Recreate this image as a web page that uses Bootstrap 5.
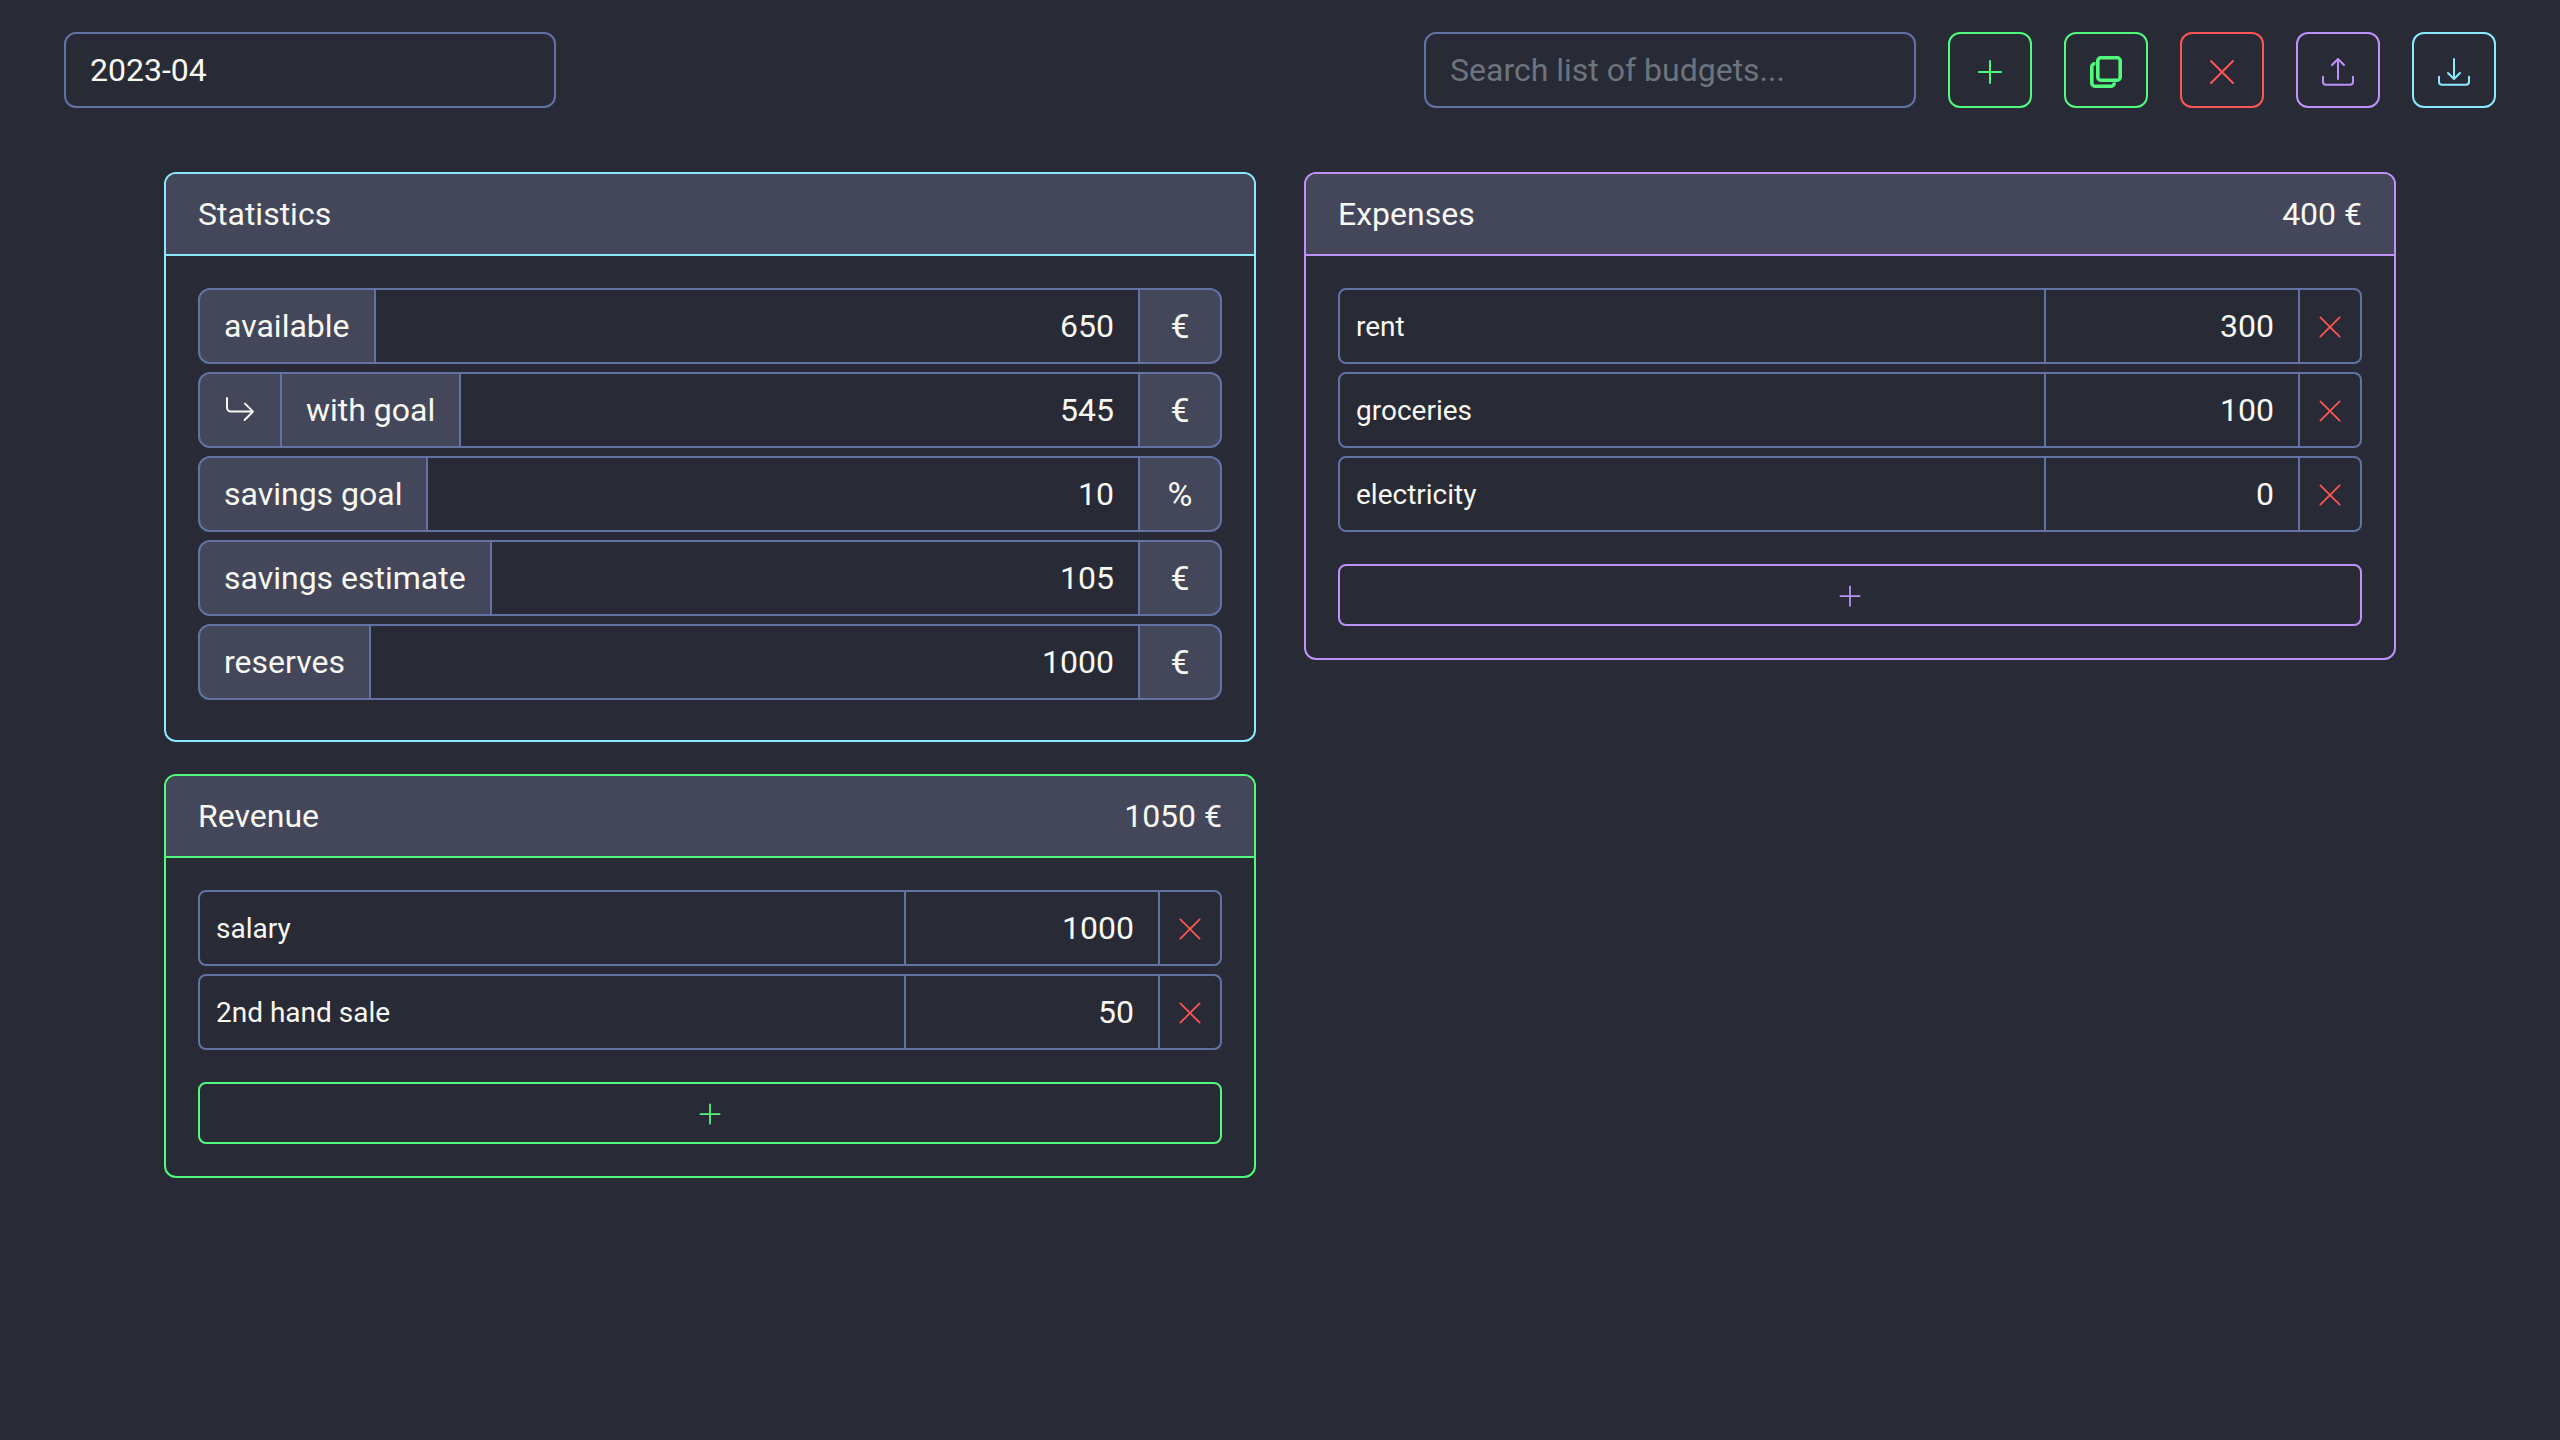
<!DOCTYPE html>
<html lang="en">
<head>
    <meta charset="UTF-8">
    <title>Budget</title>
    <link href="https://cdn.jsdelivr.net/npm/bootstrap@5.3.0/dist/css/bootstrap.min.css" rel="stylesheet">
    <style>
        html {
            font-size: 32px;
        }
        :root {
            --bs-border-width: 2px;
            --bs-border-color: #6272a4;
            --bs-body-font-family: Roboto, "Liberation Sans", sans-serif;
            --bs-body-bg: #282a36;
            --bs-body-color: #f8f8f2;
        }
        body {
            min-height: 100vh;
        }
        .ico {
            width: 1em;
            height: 1em;
            fill: currentColor;
            vertical-align: -.225em;
        }
        .top-bar {
            padding: 1rem 2rem;
            margin-bottom: 1rem;
        }
        .top-input {
            width: 492px;
            flex: none;
        }
        .container {
            max-width: 2280px;
        }
        .form-control,
        .form-control:focus {
            background-color: transparent;
            color: #f8f8f2;
            border-color: #6272a4;
            box-shadow: none;
        }
        .form-control::placeholder {
            color: #6c757d;
        }
        .input-group > .form-control-sm {
            padding-top: calc(.25rem + 2px);
        }
        .input-group-text {
            background-color: #44475a;
            color: #f8f8f2;
            border-color: #6272a4;
        }
        .unit-addon {
            width: 84px;
            justify-content: center;
            font-size: 34px;
            line-height: 48px;
        }
        .input-group > .amount-input {
            flex: 0 0 8rem;
            width: 8rem;
        }
        .budget-card {
            background-color: transparent;
            border-color: var(--accent);
            color: #f8f8f2;
        }
        .budget-card > .card-header {
            background-color: #44475a;
            border-bottom-color: var(--accent);
            color: #f8f8f2;
        }
        .accent-green { --accent: #50fa7b; }
        .accent-red { --accent: #ff5555; }
        .accent-purple { --accent: #bd93f9; }
        .accent-cyan { --accent: #8be9fd; }
        .btn-accent {
            --bs-btn-color: var(--accent);
            --bs-btn-border-color: var(--accent);
            --bs-btn-hover-color: #282a36;
            --bs-btn-hover-bg: var(--accent);
            --bs-btn-hover-border-color: var(--accent);
        }
        .btn-remove {
            --bs-btn-color: #ff5555;
            --bs-btn-border-color: #6272a4;
            --bs-btn-hover-color: #282a36;
            --bs-btn-hover-bg: #ff5555;
            --bs-btn-hover-border-color: #6272a4;
        }
    </style>
</head>
<body>
<div class="top-bar d-flex justify-content-between">
    <input type="text" class="form-control top-input" value="2023-04">
    <div class="d-flex gap-3">
        <input type="text" class="form-control top-input" placeholder="Search list of budgets...">
        <button class="btn btn-accent accent-green"><svg class="ico" viewBox="0 0 16 16"><path fill-rule="evenodd" d="M8 2a.5.5 0 0 1 .5.5v5h5a.5.5 0 0 1 0 1h-5v5a.5.5 0 0 1-1 0v-5h-5a.5.5 0 0 1 0-1h5v-5A.5.5 0 0 1 8 2Z"/></svg></button>
        <button class="btn btn-accent accent-green"><svg class="ico" viewBox="0 0 32 32"><rect x="7.8" y="1.8" width="22.4" height="22.4" rx="3" fill="none" stroke="currentColor" stroke-width="3.6"/><path d="M5.5 7.8H4.8a3 3 0 0 0-3 3v16.400a3 3 0 0 0 3 3h16.400a3 3 0 0 0 3-3v-.7" fill="none" stroke="currentColor" stroke-width="3.6"/></svg></button>
        <button class="btn btn-accent accent-red"><svg class="ico" viewBox="0 0 16 16"><path d="M2.146 2.854a.5.5 0 1 1 .708-.708L8 7.293l5.146-5.147a.5.5 0 0 1 .708.708L8.707 8l5.147 5.146a.5.5 0 0 1-.708.708L8 8.707l-5.146 5.147a.5.5 0 0 1-.708-.708L7.293 8 2.146 2.854Z"/></svg></button>
        <button class="btn btn-accent accent-purple"><svg class="ico" viewBox="0 0 16 16"><path d="M.5 9.9a.5.5 0 0 1 .5.5v2.5a1 1 0 0 0 1 1h12a1 1 0 0 0 1-1v-2.500a.5.5 0 0 1 1 0v2.500a2 2 0 0 1-2 2H2a2 2 0 0 1-2-2v-2.500a.5.5 0 0 1 .5-.5z"/><path d="M7.646 1.146a.5.5 0 0 1 .708 0l3 3a.5.5 0 0 1-.708.708L8.500 2.707V11.500a.5.5 0 0 1-1 0V2.707L5.354 4.854a.5.5 0 1 1-.708-.708l3-3z"/></svg></button>
        <button class="btn btn-accent accent-cyan"><svg class="ico" viewBox="0 0 16 16"><path d="M.5 9.9a.5.5 0 0 1 .5.5v2.500a1 1 0 0 0 1 1h12a1 1 0 0 0 1-1v-2.500a.5.5 0 0 1 1 0v2.500a2 2 0 0 1-2 2H2a2 2 0 0 1-2-2v-2.500a.5.5 0 0 1 .5-.5z"/><path d="M7.646 11.854a.5.5 0 0 0 .708 0l3-3a.5.5 0 0 0-.708-.708L8.500 10.293V1.500a.5.5 0 0 0-1 0v8.793L5.354 8.146a.5.5 0 1 0-.708.708l3 3z"/></svg></button>
    </div>
</div>

<div class="container">
    <div class="row">
        <div class="col-6">
            <div class="card budget-card accent-cyan mb-3">
                <div class="card-header">Statistics</div>
                <div class="card-body">
                    <div class="input-group mb-1">
                        <span class="input-group-text">available</span>
                        <input type="text" class="form-control text-end" value="650">
                        <span class="input-group-text unit-addon">€</span>
                    </div>
                    <div class="input-group mb-1">
                        <span class="input-group-text"><svg class="ico" viewBox="0 0 16 16"><path fill-rule="evenodd" d="M1.500 1.500A.5.5 0 0 0 1 2v4.800a2.500 2.500 0 0 0 2.500 2.500h9.793l-3.347 3.346a.5.5 0 0 0 .708.708l4.200-4.200a.5.5 0 0 0 0-.708l-4-4a.5.5 0 0 0-.708.708L13.293 8.300H3.500A1.500 1.500 0 0 1 2 6.800V2a.5.5 0 0 0-.5-.5z"/></svg></span>
                        <span class="input-group-text">with goal</span>
                        <input type="text" class="form-control text-end" value="545">
                        <span class="input-group-text unit-addon">€</span>
                    </div>
                    <div class="input-group mb-1">
                        <span class="input-group-text">savings goal</span>
                        <input type="text" class="form-control text-end" value="10">
                        <span class="input-group-text unit-addon">%</span>
                    </div>
                    <div class="input-group mb-1">
                        <span class="input-group-text">savings estimate</span>
                        <input type="text" class="form-control text-end" value="105">
                        <span class="input-group-text unit-addon">€</span>
                    </div>
                    <div class="input-group mb-1">
                        <span class="input-group-text">reserves</span>
                        <input type="text" class="form-control text-end" value="1000">
                        <span class="input-group-text unit-addon">€</span>
                    </div>
                </div>
            </div>

            <div class="card budget-card accent-green">
                <div class="card-header d-flex justify-content-between">
                    <span>Revenue</span>
                    <span>1050 €</span>
                </div>
                <div class="card-body">
                    <div class="input-group mb-1">
                        <input type="text" class="form-control form-control-sm" value="salary">
                        <input type="text" class="form-control text-end amount-input" value="1000">
                        <button class="btn btn-sm btn-remove"><svg class="ico" viewBox="0 0 16 16"><path d="M2.146 2.854a.5.5 0 1 1 .708-.708L8 7.293l5.146-5.147a.5.5 0 0 1 .708.708L8.707 8l5.147 5.146a.5.5 0 0 1-.708.708L8 8.707l-5.146 5.147a.5.5 0 0 1-.708-.708L7.293 8 2.146 2.854Z"/></svg></button>
                    </div>
                    <div class="input-group mb-1">
                        <input type="text" class="form-control form-control-sm" value="2nd hand sale">
                        <input type="text" class="form-control text-end amount-input" value="50">
                        <button class="btn btn-sm btn-remove"><svg class="ico" viewBox="0 0 16 16"><path d="M2.146 2.854a.5.5 0 1 1 .708-.708L8 7.293l5.146-5.147a.5.5 0 0 1 .708.708L8.707 8l5.147 5.146a.5.5 0 0 1-.708.708L8 8.707l-5.146 5.147a.5.5 0 0 1-.708-.708L7.293 8 2.146 2.854Z"/></svg></button>
                    </div>
                    <button class="btn btn-sm btn-accent accent-green d-block w-100 mt-3"><svg class="ico" viewBox="0 0 16 16"><path fill-rule="evenodd" d="M8 2a.5.5 0 0 1 .5.5v5h5a.5.5 0 0 1 0 1h-5v5a.5.5 0 0 1-1 0v-5h-5a.5.5 0 0 1 0-1h5v-5A.5.5 0 0 1 8 2Z"/></svg></button>
                </div>
            </div>
        </div>

        <div class="col-6">
            <div class="card budget-card accent-purple">
                <div class="card-header d-flex justify-content-between">
                    <span>Expenses</span>
                    <span>400 €</span>
                </div>
                <div class="card-body">
                    <div class="input-group mb-1">
                        <input type="text" class="form-control form-control-sm" value="rent">
                        <input type="text" class="form-control text-end amount-input" value="300">
                        <button class="btn btn-sm btn-remove"><svg class="ico" viewBox="0 0 16 16"><path d="M2.146 2.854a.5.5 0 1 1 .708-.708L8 7.293l5.146-5.147a.5.5 0 0 1 .708.708L8.707 8l5.147 5.146a.5.5 0 0 1-.708.708L8 8.707l-5.146 5.147a.5.5 0 0 1-.708-.708L7.293 8 2.146 2.854Z"/></svg></button>
                    </div>
                    <div class="input-group mb-1">
                        <input type="text" class="form-control form-control-sm" value="groceries">
                        <input type="text" class="form-control text-end amount-input" value="100">
                        <button class="btn btn-sm btn-remove"><svg class="ico" viewBox="0 0 16 16"><path d="M2.146 2.854a.5.5 0 1 1 .708-.708L8 7.293l5.146-5.147a.5.5 0 0 1 .708.708L8.707 8l5.147 5.146a.5.5 0 0 1-.708.708L8 8.707l-5.146 5.147a.5.5 0 0 1-.708-.708L7.293 8 2.146 2.854Z"/></svg></button>
                    </div>
                    <div class="input-group mb-1">
                        <input type="text" class="form-control form-control-sm" value="electricity">
                        <input type="text" class="form-control text-end amount-input" value="0">
                        <button class="btn btn-sm btn-remove"><svg class="ico" viewBox="0 0 16 16"><path d="M2.146 2.854a.5.5 0 1 1 .708-.708L8 7.293l5.146-5.147a.5.5 0 0 1 .708.708L8.707 8l5.147 5.146a.5.5 0 0 1-.708.708L8 8.707l-5.146 5.147a.5.5 0 0 1-.708-.708L7.293 8 2.146 2.854Z"/></svg></button>
                    </div>
                    <button class="btn btn-sm btn-accent accent-purple d-block w-100 mt-3"><svg class="ico" viewBox="0 0 16 16"><path fill-rule="evenodd" d="M8 2a.5.5 0 0 1 .5.5v5h5a.5.5 0 0 1 0 1h-5v5a.5.5 0 0 1-1 0v-5h-5a.5.5 0 0 1 0-1h5v-5A.5.5 0 0 1 8 2Z"/></svg></button>
                </div>
            </div>
        </div>
    </div>
</div>
<script src="https://cdn.jsdelivr.net/npm/bootstrap@5.3.0/dist/js/bootstrap.bundle.min.js"></script>
</body>
</html>
